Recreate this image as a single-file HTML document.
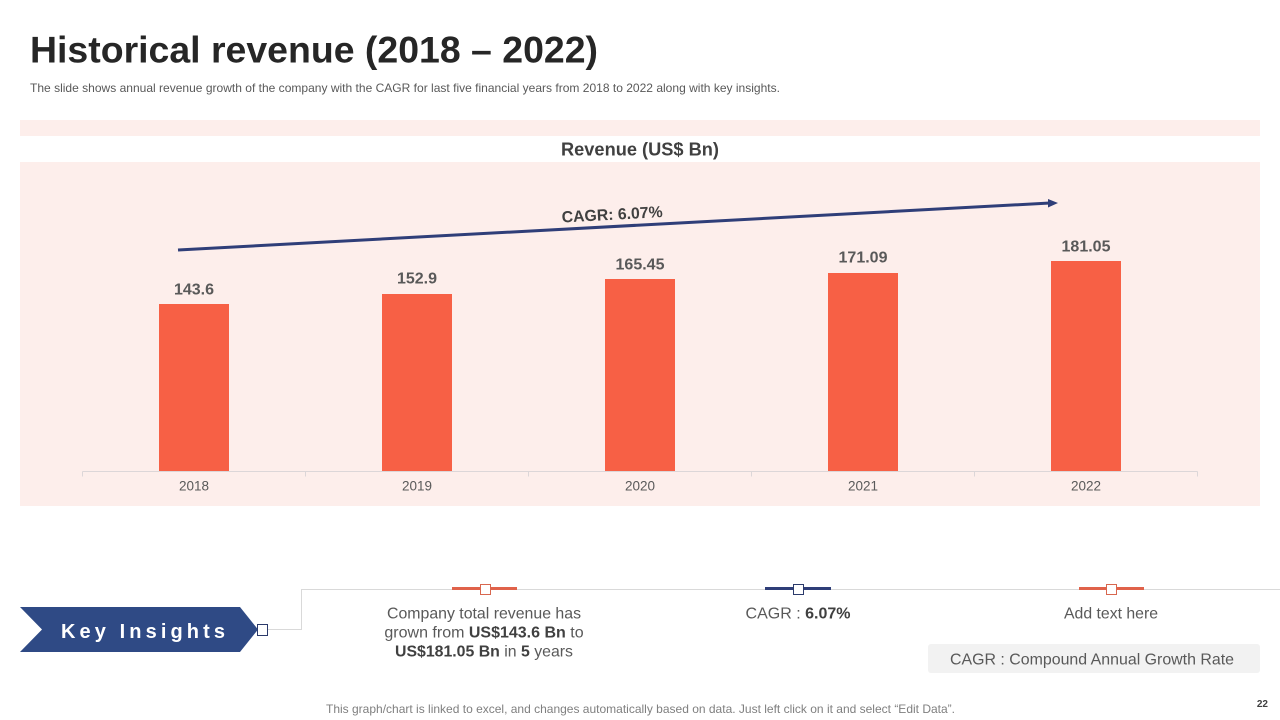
<!DOCTYPE html>
<html lang="en">
<head>
<meta charset="utf-8">
<title>Historical revenue (2018 – 2022)</title>
<style>
html,body{margin:0;padding:0;background:#fff;width:1280px;height:720px;overflow:hidden}
svg{display:block;font-family:"Liberation Sans",Arial,sans-serif}
</style>
</head>
<body>
<svg width="1280" height="720" viewBox="0 0 1280 720" xmlns="http://www.w3.org/2000/svg">
<rect width="1280" height="720" fill="#fff"/>
<text x="30" y="62.500" font-size="37" font-weight="700" fill="#262626" textLength="568" lengthAdjust="spacingAndGlyphs">Historical revenue (2018 – 2022)</text>
<text x="30" y="92" font-size="12" fill="#595959" textLength="750" lengthAdjust="spacingAndGlyphs">The slide shows annual revenue growth of the company with the CAGR for last five financial years from 2018 to 2022 along with key insights.</text>
<rect x="20" y="120" width="1240" height="16" fill="#fdeeeb"/>
<rect x="20" y="162" width="1240" height="344" fill="#fdeeeb"/>
<text x="561" y="155.500" font-size="18" font-weight="700" fill="#404040" textLength="158" lengthAdjust="spacingAndGlyphs">Revenue (US$ Bn)</text>

<line x1="178" y1="250" x2="1050" y2="203" stroke="#2f3e78" stroke-width="3"/>
<polygon points="1058,203 1048,199 1048,207.500" fill="#2f3e78"/>
<text transform="translate(562 222.500) rotate(-3.100)" font-size="16" font-weight="700" fill="#404040" textLength="101" lengthAdjust="spacingAndGlyphs">CAGR: 6.07%</text>

<g fill="#f76045">
<rect x="159" y="304" width="70" height="167"/>
<rect x="382" y="294" width="70" height="177"/>
<rect x="605" y="279" width="70" height="192"/>
<rect x="828" y="273" width="70" height="198"/>
<rect x="1051" y="261" width="70" height="210"/>
</g>
<g font-size="16" font-weight="700" fill="#595959" text-anchor="middle">
<text x="194" y="294.500">143.6</text>
<text x="417" y="283.500">152.9</text>
<text x="640" y="269.500">165.45</text>
<text x="863" y="262.500">171.09</text>
<text x="1086" y="251.500">181.05</text>
</g>
<g stroke="#dcd6d8" stroke-width="1" fill="none">
<path d="M82.500 471.500H1197.500"/>
<path d="M82.500 471.500v5M305.500 471.500v5M528.500 471.500v5M751.500 471.500v5M974.500 471.500v5M1197.500 471.500v5"/>
</g>
<g font-size="13.500" fill="#595959" text-anchor="middle">
<text x="194" y="490.500">2018</text>
<text x="417" y="490.500">2019</text>
<text x="640" y="490.500">2020</text>
<text x="863" y="490.500">2021</text>
<text x="1086" y="490.500">2022</text>
</g>

<path d="M1280 589.500H301.500V629.500H266" fill="none" stroke="#d9d9d9" stroke-width="1"/>
<polygon points="20,607 240,607 258,629.500 240,652 20,652 42,629.500" fill="#2f4a85"/>
<rect x="257.500" y="624.500" width="10" height="11" fill="#fff" stroke="#2b3a6b" stroke-width="1"/>
<text x="61" y="638" font-size="20" font-weight="700" fill="#fff" textLength="164" lengthAdjust="spacing">Key Insights</text>

<rect x="452" y="587" width="65" height="3" fill="#e0624a"/>
<rect x="480.500" y="584.500" width="10" height="10" fill="#fff" stroke="#d8674f"/>
<rect x="765" y="587" width="66" height="3" fill="#2f3e78"/>
<rect x="793.500" y="584.500" width="10" height="10" fill="#fff" stroke="#2b3a6b"/>
<rect x="1079" y="587" width="65" height="3" fill="#e0624a"/>
<rect x="1106.500" y="584.500" width="10" height="10" fill="#fff" stroke="#d8674f"/>

<g font-size="16" fill="#595959" text-anchor="middle">
<text x="484" y="618.500" textLength="194" lengthAdjust="spacingAndGlyphs">Company total revenue has</text>
<text x="484" y="637.500">grown from <tspan font-weight="700" fill="#404040">US$143.6 Bn</tspan> to</text>
<text x="484" y="656.500" textLength="178" lengthAdjust="spacingAndGlyphs"><tspan font-weight="700" fill="#404040">US$181.05 Bn</tspan> in <tspan font-weight="700" fill="#404040">5</tspan> years</text>
<text x="798" y="618.500">CAGR : <tspan font-weight="700" fill="#404040">6.07%</tspan></text>
<text x="1111" y="618.500" textLength="94" lengthAdjust="spacingAndGlyphs">Add text here</text>
</g>
<rect x="928" y="644" width="332" height="29" rx="3" fill="#f2f2f2"/>
<text x="1092" y="664.500" font-size="16" fill="#595959" text-anchor="middle" textLength="284" lengthAdjust="spacingAndGlyphs">CAGR : Compound Annual Growth Rate</text>

<text x="326" y="713" font-size="12" fill="#7f7f7f" textLength="629" lengthAdjust="spacingAndGlyphs">This graph/chart is linked to excel, and changes automatically based on data. Just left click on it and select “Edit Data”.</text>
<text x="1268" y="707" font-size="10" font-weight="700" fill="#404040" text-anchor="end">22</text>
</svg>
</body>
</html>
